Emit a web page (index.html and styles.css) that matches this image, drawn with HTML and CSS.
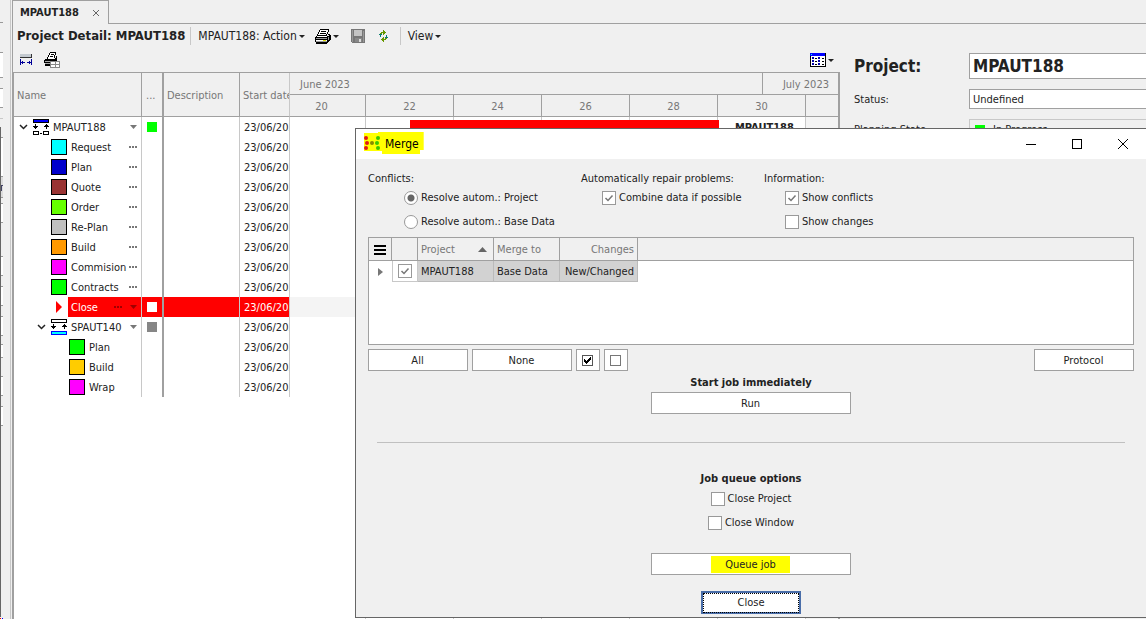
FILE: index.html
```html
<!DOCTYPE html>
<html lang="en">
<head>
  <meta charset="UTF-8" />
  <meta name="viewport" content="width=device-width, initial-scale=1.0" />
  <title>Project Detail: MPAUT188</title>
  <link rel="stylesheet" href="styles.css">
</head>
<body>
  <div class="app">
    <!-- edge of the docked panel on the left -->
    <aside class="dock">
      <svg width="3" height="619" shape-rendering="crispEdges">
        <path fill="#fff" d="M0 53h3v24H0zM0 89h3v18H0zM0 138h3v38H0zM0 204h3v18H0zM0 257h3v18H0zM0 287h3v18H0zM0 317h3v18H0zM0 345h3v12H0zM0 377h3v18H0zM0 407h3v18H0z" />
        <path fill="#ddd" d="M0 177h3v20H0z" />
        <path stroke="#999" d="M0 22.5h3M0 52.5h3M0 77.5h3M0 88.5h3M0 107.5h3M0 137.5h3M0 176.5h3M0 197.5h3M0 203.5h3M0 222.5h3M0 256.5h3M0 275.5h3M0 286.5h3M0 305.5h3M0 316.5h3M0 335.5h3M0 344.5h3M0 357.5h3M0 376.5h3M0 395.5h3M0 406.5h3M0 425.5h3" />
        <path stroke="#c8c8c8" d="M0 118.5h3" />
        <path fill="#666" d="M0 127h1v490H0z" />
        <path fill="#446" d="M1 185h2v1H1zM1 186h1v5H1z" />
        <path fill="#f00" d="M0 618h1v1H0z" />
        <path fill="#00f" d="M2 618h1v1H2z" />
      </svg>
    </aside>

    <main class="workspace">
      <div class="tabs">
        <div class="tab">MPAUT188 <button class="tab-close" aria-label="Close tab"><svg width="8" height="8" viewBox="0 0 8 8"><path d="M1 1l6 6M7 1L1 7" stroke="#666" /></svg></button></div>
      </div>

      <div class="toolbar">
        <h1>Project Detail: MPAUT188</h1>
        <button class="tool action">MPAUT188: Action <i class="caret"></i></button>
        <button class="tool print" aria-label="Print">
          <svg width="16" height="15" viewBox="0 0 16 15" shape-rendering="crispEdges">
            <path d="M5 1h9l-3 6H2z" fill="#fff" />
            <path d="M5 0h9v1H5zM4 1h1v2H4zM13 1h1v2h-1zM3 3h1v2H3zM12 3h1v2h-1zM2 5h1v2H2zM6 2h5v1H6zM5 4h6v1H5zM11 5h1v1h-1z" />
            <path d="M1 7h11v6H1z" fill="#fff" />
            <path d="M2 6h10v1H2zM1 7h1v1H1zM0 8h12v1H0zM0 8h1v5H0zM0 10h12v1H0zM1 13h11v2H1zM12 7h1v7h-1zM13 5h2v1h-2zM13 7h1v1h-1zM14 6h2v5h-2zM13 11h2v1h-2zM13 12h1v1h-1z" />
            <path d="M1 9h11v1H1zM1 12h11v1H1zM13 8h1v3h-1z" fill="#999" />
            <path d="M8 11h3v1H8z" fill="#dd0" />
          </svg>
          <i class="caret"></i>
        </button>
        <button class="tool save" aria-label="Save">
          <svg width="14" height="14" viewBox="0 0 14 14" shape-rendering="crispEdges">
            <path d="M0 0h14v14H1l-1-1z" fill="#777" />
            <path d="M1 1h1v12H1zM12 2h1v11h-1z" fill="#999" />
            <path d="M3 1h8v6H3z" fill="#c4c4c4" />
            <path d="M4 9h7v4H4z" fill="#888" />
            <path d="M8 10h2v3H8z" fill="#ddd" />
          </svg>
        </button>
        <button class="tool refresh" aria-label="Refresh">
          <svg width="9" height="12" viewBox="0 0 9 12" shape-rendering="crispEdges">
            <path d="M4 0h1v1h1v1h1v1H6v1H5v1H4V3H3v1H2v2H1V3h1V2h2z" fill="#690" />
            <path d="M5 12H4v-1H3v-1H2V9h1V8h1V7h1v2h1V8h1V6h1v3H7v1H5z" fill="#690" />
            <path d="M0 4h3v1H0zM1 5h1v2H1zM6 7h3v1H6zM7 5h1v2H7z" fill="#088070" />
          </svg>
        </button>
        <button class="tool view">View <i class="caret"></i></button>
      </div>

      <div class="content">
        <section class="plan">
          <div class="plan-tools">
            <button class="tool" aria-label="Fit columns">
              <svg width="13" height="12" viewBox="0 0 13 12" shape-rendering="crispEdges">
                <path d="M0 0h12v4H0z" fill="#c4cad0" />
                <path d="M11 0h1v4H0V3h11z" fill="#333" />
                <path d="M0 5h1v6H0zM11 5h1v6h-1zM1 8h4v1H1zM7 8h4v1H7zM2 7h1v3H2zM9 7h1v3H9z" fill="#009" />
              </svg>
            </button>
            <button class="tool" aria-label="Print preview">
              <svg width="17" height="17" viewBox="0 0 17 17" shape-rendering="crispEdges">
                <path d="M5 1h7l-2 6H3z" fill="#fff" />
                <path d="M6 0h6v1H6zM5 1h1v2H5zM4 3h1v2H4zM3 5h1v2H3zM11 1h1v2h-1zM10 3h1v3h-1zM7 2h3v1H7zM6 4h3v1H6zM1 7h11v1H1zM0 8h13v3H0zM1 12h6v2H1zM11 6h2v2h-2zM12 4h1v2h-1z" />
                <path d="M1 9h9v1H1zM1 11h6v1H1z" fill="#aaa" />
                <path d="M6 9h10v7H6z" fill="#fff" />
                <path d="M6 9h10v1H6zM6 15h10v1H6zM6 9h1v7H6zM15 9h1v7h-1zM7 12h8v1H7zM11 10h1v5h-1z" fill="#888" />
              </svg>
            </button>
            <button class="tool columns" aria-label="Table view">
              <svg width="16" height="14" viewBox="0 0 16 14" shape-rendering="crispEdges">
                <path d="M0 0h16v14H0z" />
                <path d="M0 3h15v10H1V3z" fill="#fff" />
                <path d="M0 0h15v3H0z" fill="#00f" />
                <path d="M1 1h1v1H1z" fill="#0ff" />
                <path d="M2 4h2v2H2zM2 7h2v2H2zM2 10h2v2H2zM8 4h2v2H8zM8 7h2v2H8zM8 10h2v2H8z" fill="#00a" />
                <path d="M5 5h2v1H5zM5 8h2v1H5zM5 11h2v1H5zM12 5h2v1h-2zM12 8h2v1h-2zM12 11h2v1h-2z" />
              </svg>
              <i class="caret"></i>
            </button>
          </div>

          <div class="gantt">
            <table class="tree">
              <colgroup><col class="col-name"><col class="col-state"><col class="col-desc"><col class="col-start"></colgroup>
              <thead>
                <tr><th>Name</th><th class="dots-head">...</th><th>Description</th><th>Start date</th></tr>
              </thead>
              <tbody id="tree-rows"></tbody>
            </table>

            <div class="timeline">
              <div class="months"><span class="june">June 2023</span><span class="july">July 2023</span></div>
              <div class="days"><span>20</span><span>22</span><span>24</span><span>26</span><span>28</span><span>30</span><span></span></div>
              <div class="chart">
                <div class="lane"><div class="bar"></div><b>MPAUT188</b></div>
                <div class="lane-selected"></div>
              </div>
            </div>
          </div>
        </section>

        <section class="detail">
          <label class="big" for="project">Project:</label>
          <input class="big" id="project" type="text" value="MPAUT188">
          <label for="status">Status:</label>
          <select id="status"><option>Undefined</option></select>
          <span>Planning State:</span>
          <div class="planning"><i class="led"></i>In Progress</div>
        </section>
      </div>
    </main>
  </div>

  <!-- Merge dialog -->
  <div class="dialog" role="dialog" aria-labelledby="dialog-title">
    <header class="titlebar">
      <div class="caption">
        <svg width="16" height="15" viewBox="0 0 16 15">
          <g fill="#e01818"><circle cx="2" cy="2" r="2" /><circle cx="3" cy="7" r="2" /><circle cx="2" cy="12" r="2" /></g>
          <circle cx="8" cy="7" r="2" fill="#8a8a00" />
          <g fill="#3cc800"><circle cx="14" cy="2" r="2" /><circle cx="13" cy="7" r="2" /><circle cx="14" cy="12" r="2" /></g>
        </svg>
        <span id="dialog-title">Merge</span>
      </div>
      <div class="window-buttons">
        <button aria-label="Minimize"><svg width="10" height="10" shape-rendering="crispEdges"><path d="M0 5.5h10" stroke="#000" /></svg></button>
        <button aria-label="Maximize"><svg width="10" height="10" shape-rendering="crispEdges"><path d="M.5.5h9v9h-9z" fill="none" stroke="#000" /></svg></button>
        <button aria-label="Close"><svg width="10" height="10"><path d="M0 0l10 10M10 0L0 10" stroke="#000" /></svg></button>
      </div>
    </header>

    <div class="dialog-body">
      <div class="options">
        <div class="group conflicts">
          <p>Conflicts:</p>
          <label><input type="radio" name="conflicts" checked>Resolve autom.: Project</label>
          <label><input type="radio" name="conflicts">Resolve autom.: Base Data</label>
        </div>
        <div class="group">
          <p>Automatically repair problems:</p>
          <label><input type="checkbox" checked>Combine data if possible</label>
        </div>
        <div class="group">
          <p>Information:</p>
          <label><input type="checkbox" checked>Show conflicts</label>
          <label><input type="checkbox">Show changes</label>
        </div>
      </div>

      <div class="list">
        <table class="merge">
          <colgroup><col class="col-handle"><col class="col-check"><col class="col-project"><col class="col-merge"><col class="col-changes"><col></colgroup>
          <thead>
            <tr>
              <th><svg class="menu" width="12" height="10" shape-rendering="crispEdges"><path d="M0 0h12v2H0zM0 4h12v2H0zM0 8h12v2H0z" /></svg></th>
              <th></th>
              <th><span class="sorted">Project <svg width="9" height="5"><path d="M0 5l4.500-5L9 5z" fill="#666" /></svg></span></th>
              <th>Merge to</th>
              <th class="right">Changes</th>
              <th></th>
            </tr>
          </thead>
          <tbody>
            <tr>
              <td><svg class="menu" width="5" height="8"><path d="M0 0l5 4-5 4z" fill="#777" /></svg></td>
              <td class="check"><input type="checkbox" aria-label="Merge MPAUT188" checked></td>
              <td class="cell">MPAUT188</td>
              <td class="cell">Base Data</td>
              <td class="cell right">New/Changed</td>
              <td></td>
            </tr>
          </tbody>
        </table>
      </div>

      <div class="list-buttons">
        <button class="btn">All</button>
        <button class="btn">None</button>
        <button class="btn small" aria-label="Check all"><svg width="11" height="11" shape-rendering="crispEdges"><path d="M.5.5h10v10H.5z" fill="#fff" stroke="#555" /><path d="M2 4h1v1h1v1h1V5h1V4h1V3h1V2h1v3H8v1H7v1H6v1H5v1H4V8H3V7H2z" /></svg></button>
        <button class="btn small" aria-label="Uncheck all"><svg width="11" height="11" shape-rendering="crispEdges"><path d="M.5.5h10v10H.5z" fill="#fff" stroke="#777" /></svg></button>
        <button class="btn protocol">Protocol</button>
      </div>

      <div class="jobs">
        <h2>Start job immediately</h2>
        <button class="btn wide">Run</button>
        <hr>
        <h2>Job queue options</h2>
        <label><input type="checkbox">Close Project</label>
        <label><input type="checkbox">Close Window</label>
        <button class="btn wide queue"><mark>Queue job</mark></button>
        <button class="btn default"><span>Close</span></button>
      </div>
    </div>
  </div>

  <script>
    const icons = {
      project: `<svg width="16" height="16" shape-rendering="crispEdges">
        <path d="M0 0h16v4H0z" /><path d="M1 1h14v2H1z" fill="#00f" />
        <path d="M2 5h1v5H2zM0 7h5v1H0zM1 8h3v1H1zM13 5h1v5h-1zM12 6h3v1h-3zM11 7h5v1h-5zM7 14h2v1H7z" />
        <path d="M.5 12.500h5v3h-5zM10.500 12.500h5v3h-5z" fill="#fff" stroke="#000" /></svg>`,
      sub: `<svg width="16" height="16" shape-rendering="crispEdges">
        <path d="M.5.5h15v3H.5z" fill="#fff" stroke="#000" />
        <path d="M2 5h1v5H2zM0 7h5v1H0zM1 8h3v1H1zM13 5h1v5h-1zM12 6h3v1h-3zM11 7h5v1h-5z" />
        <path d="M.5 12.500h15v3H.5z" fill="#0ff" stroke="#00f" /></svg>`,
      current: `<svg width="16" height="16"><path d="M5 2l6 6-6 6z" fill="#f00" /></svg>`,
      chevron: `<svg width="9" height="6"><path d="M1 1l3.500 3.500L8 1" fill="none" stroke="#222" stroke-width="1.500" /></svg>`,
      dots: `<svg width="8" height="2" shape-rendering="crispEdges"><path d="M0 0h2v2H0zM3 0h2v2H3zM6 0h2v2H6z" fill="currentColor" /></svg>`,
      arrow: `<svg width="7" height="4"><path d="M0 0h7L3.500 4z" fill="currentColor" /></svg>`
    };

    const rows = [
      { name: "MPAUT188", level: 0, icon: "project", state: "#00ff00", menu: ["arrow"] },
      { name: "Request", level: 1, color: "#00ffff", menu: ["dots"] },
      { name: "Plan", level: 1, color: "#0000cc", menu: ["dots"] },
      { name: "Quote", level: 1, color: "#993333", menu: ["dots"] },
      { name: "Order", level: 1, color: "#66ff00", menu: ["dots"] },
      { name: "Re-Plan", level: 1, color: "#c0c0c0", menu: ["dots"] },
      { name: "Build", level: 1, color: "#ff9900", menu: ["dots"] },
      { name: "Commision", level: 1, color: "#ff00ff", menu: ["dots"] },
      { name: "Contracts", level: 1, color: "#00ff00", menu: ["dots"] },
      { name: "Close", level: 1, icon: "current", state: "#ffffff", menu: ["dots", "arrow"], selected: true },
      { name: "SPAUT140", level: 1, icon: "sub", state: "#868686", menu: ["arrow"] },
      { name: "Plan", level: 2, color: "#00ff00", menu: [] },
      { name: "Build", level: 2, color: "#ffcc00", menu: [] },
      { name: "Wrap", level: 2, color: "#ff00ff", menu: [] }
    ];

    document.getElementById("tree-rows").innerHTML = rows.map(row => {
      const open = row.icon === "project" || row.icon === "sub";
      const icon = row.icon ? icons[row.icon] : `<i class="swatch" style="background: ${row.color}"></i>`;
      const state = row.state ? `<i class="state" style="background: ${row.state}"></i>` : "";
      return `
        <tr class="${row.selected ? "selected" : ""}">
          <td><div class="node level-${row.level}">
            <span class="toggle">${open ? icons.chevron : ""}</span>${icon}
            <span class="name"><span class="label">${row.name}</span><span class="menu-icons">${row.menu.map(m => icons[m]).join("")}</span></span>
          </div></td>
          <td>${state}</td>
          <td></td>
          <td>23/06/2023</td>
        </tr>`;
    }).join("");
  </script>
</body>
</html>
```
FILE: styles.css
```css
* {
  box-sizing: border-box;
}
body {
  margin: 0;
  height: 100vh;
  overflow: hidden;
  background: #f0f0f0;
  color: #222;
  font-family: "DejaVu Sans Condensed", "DejaVu Sans", sans-serif;
  font-size: 11px;
  line-height: 18px;
}
button, input, select {
  font: inherit;
  color: inherit;
  margin: 0;
}
h1, h2, p {
  margin: 0;
}
svg {
  display: block;
  flex: none;
}

/* Main window */
.app {
  display: flex;
  height: 100vh;
}
.dock {
  flex: none;
  width: 12px;
  overflow: hidden;
  background: linear-gradient(90deg, transparent 10px, #c8c8c8 10px, #c8c8c8 11px, transparent 11px);
}
.workspace {
  flex: 1;
  min-width: 0;
  display: flex;
  flex-direction: column;
}
.tabs {
  display: flex;
  height: 24px;
}
.tabs::after {
  content: "";
  flex: 1;
  border-bottom: 1px solid #a0a0a0;
}
.tab {
  display: flex;
  align-items: center;
  gap: 13px;
  padding: 0 8px 0 7px;
  border: 1px solid #a0a0a0;
  border-bottom: none;
  font-weight: bold;
}
.tab-close {
  display: flex;
  padding: 0;
  border: none;
  background: none;
}
.toolbar {
  display: flex;
  align-items: center;
  height: 24px;
  padding-left: 4px;
  border-left: 1px solid #a0a0a0;
}
.toolbar h1 {
  font-size: 13px;
  padding-right: 5px;
  border-right: 1px solid #c8c8c8;
}
.tool {
  display: flex;
  align-items: center;
  gap: 2px;
  padding: 0;
  border: none;
  background: none;
  font-size: 12px;
}
.action {
  margin-left: 7px;
}
.print {
  margin-left: 10px;
}
.save {
  margin-left: 12px;
}
.refresh {
  margin-left: 14px;
}
.view {
  margin-left: 12px;
  padding-left: 7px;
  border-left: 1px solid #c8c8c8;
}
.caret {
  border: 3px solid transparent;
  border-top-color: #222;
  border-bottom: none;
}
.content {
  flex: 1;
  min-height: 0;
  display: flex;
}
.plan {
  flex: 1;
  min-width: 0;
  display: flex;
  flex-direction: column;
}
.plan-tools {
  display: flex;
  align-items: center;
  gap: 11px;
  height: 24px;
  padding: 0 6px 0 7px;
  border-left: 1px solid #a0a0a0;
}
.columns {
  margin-left: auto;
}

/* Tree and time line */
.gantt {
  flex: 1;
  display: flex;
  background: #fff;
  border: 2px solid #a0a0a0;
  border-top-width: 1px;
  border-bottom: none;
}
table {
  border-collapse: separate;
  border-spacing: 0;
  table-layout: fixed;
}
th, td {
  padding: 0;
  font-weight: normal;
  text-align: left;
  white-space: nowrap;
  overflow: hidden;
}
th {
  background: #f0f0f0;
  color: #777;
  border-right: 1px solid #a0a0a0;
  border-bottom: 1px solid #a0a0a0;
}
.tree {
  flex: none;
  align-self: flex-start;
  width: 276px;
}
.col-name {
  width: 128px;
}
.col-state {
  width: 22px;
}
.col-desc {
  width: 76px;
}
.col-start {
  width: 50px;
}
.tree th {
  height: 44px;
  padding: 2px 0 0 3px;
}
.tree .dots-head {
  padding-left: 4px;
}
.tree td {
  height: 20px;
  border-right: 1px solid #c8c8c8;
}
.tree th:nth-child(2), .tree td:nth-child(2) {
  border-right: 2px solid #a0a0a0;
}
.tree th:nth-child(4) {
  border-right-color: #c8c8c8;
}
.tree td:nth-child(4) {
  padding: 2px 0 0 4px;
}
.node {
  display: flex;
  align-items: center;
  height: 20px;
}
.level-1 {
  padding-left: 18px;
}
.level-2 {
  padding-left: 36px;
}
.toggle {
  flex: none;
  width: 19px;
  padding-left: 5px;
}
.swatch {
  flex: none;
  width: 16px;
  height: 16px;
  border: 1px solid #000;
}
.name {
  flex: 1;
  display: flex;
  align-items: center;
  justify-content: space-between;
  height: 20px;
  margin-left: 1px;
  padding: 0 4px 0 3px;
}
.label {
  padding-top: 2px;
}
.menu-icons {
  display: flex;
  align-items: center;
  gap: 8px;
  color: #777;
}
.state {
  display: block;
  width: 10px;
  height: 10px;
  margin-left: 5px;
}
.selected .name, .selected td:not(:first-child) {
  background: #f00;
  color: #fff;
}
.selected .menu-icons {
  color: #a00000;
}
.timeline {
  flex: 1;
  min-width: 0;
  display: flex;
  flex-direction: column;
}
.months, .days {
  display: flex;
  height: 22px;
  line-height: 23px;
  background: #f0f0f0;
  border-bottom: 1px solid #a0a0a0;
  color: #777;
}
.june {
  flex: 1;
  padding-left: 10px;
}
.july {
  width: 76px;
  padding-right: 9px;
  border-left: 1px solid #a0a0a0;
  text-align: right;
}
.days span {
  width: 88px;
  border-right: 1px solid #a0a0a0;
  text-align: center;
}
.days span:first-child {
  width: 76px;
  padding-right: 12px;
}
.days span:last-child {
  flex: 1;
  border: none;
}
.chart {
  flex: 1;
  background: linear-gradient(90deg, transparent 516px, #f4f4f4 516px), repeating-linear-gradient(90deg, transparent 0, transparent 75px, #c8c8c8 75px, #c8c8c8 76px, transparent 76px, transparent 88px);
}
.lane {
  display: flex;
  height: 180px;
  padding: 3px 0 0 120px;
}
.bar {
  width: 309px;
  height: 14px;
  background: #f00;
}
.lane b {
  padding: 0 8px 0 16px;
  height: 14px;
  line-height: 15px;
}
.lane-selected {
  height: 20px;
  background: #f4f4f4;
}

/* Project fields */
.detail {
  flex: none;
  width: 306px;
  display: grid;
  grid-template-columns: 115px 1fr;
  grid-template-rows: 26px 20px 20px;
  row-gap: 10px;
  align-items: center;
  padding: 5px 0 0 14px;
}
.detail > label:not(.big), .detail > span {
  padding-top: 2px;
}
.detail input, .detail select, .planning {
  width: 100%;
  height: 100%;
  padding: 0 3px;
  border: 1px solid #a0a0a0;
  border-right: none;
  border-radius: 0;
  background: #fff;
  appearance: none;
}
.detail select, .detail .planning {
  padding-top: 1px;
}
.detail .big {
  font-size: 17px;
  font-weight: bold;
}
.detail .planning {
  display: flex;
  align-items: center;
  gap: 8px;
  padding-left: 5px;
  border-color: #c8c8c8;
  background: #f0f0f0;
}
.led {
  width: 10px;
  height: 10px;
  background: #0f0;
}

/* Dialog */
.dialog {
  position: absolute;
  top: 128px;
  left: 355px;
  right: 0;
  border: 1px solid #666;
  border-right: none;
  background: #f0f0f0;
}
.titlebar {
  display: flex;
  justify-content: space-between;
  height: 30px;
  background: #fff;
}
.caption {
  align-self: flex-start;
  display: flex;
  align-items: center;
  gap: 5px;
  height: 22px;
  margin: 3px 0 0 8px;
  padding: 0 5px 0 0;
  background: #ff0;
  clip-path: polygon(0 1px, 14px 1px, 14px 0, 100% 0, 100% 18px, 56px 18px, 56px 100%, 18px 100%, 18px 19px, 0 19px);
  color: #000;
  font-size: 12px;
}
#dialog-title {
  padding-top: 2px;
}
.window-buttons {
  display: flex;
}
.window-buttons button {
  display: flex;
  align-items: center;
  justify-content: center;
  width: 46px;
  padding: 0;
  border: none;
  background: none;
}
.dialog-body {
  padding: 9px 12px 3px;
}
.options {
  display: grid;
  grid-template-columns: 213px 183px 1fr;
}
.group p {
  padding-top: 3px;
  line-height: 15px;
}
.group label {
  display: flex;
  align-items: center;
  gap: 3px;
  height: 24px;
  padding-left: 21px;
}
.conflicts label {
  padding-left: 36px;
}
input[type="checkbox"], input[type="radio"] {
  appearance: none;
  flex: none;
  width: 14px;
  height: 14px;
  border: 1px solid #999;
  background: #fff;
}
input[type="radio"] {
  border-radius: 50%;
}
input[type="radio"]:checked {
  background: radial-gradient(circle, #666 3px, #fff 4px);
}
input[type="checkbox"]:checked {
  background: #fff url("data:image/svg+xml,%3Csvg xmlns='http://www.w3.org/2000/svg' width='12' height='12'%3E%3Cpath d='M2.500 6l2.500 2.500L9.500 3.500' fill='none' stroke='%23777' stroke-width='1.500'/%3E%3C/svg%3E") center no-repeat;
}
.list {
  height: 108px;
  margin-top: 3px;
  border: 1px solid #a0a0a0;
  background: #fff;
}
.merge {
  width: 100%;
}
.col-handle {
  width: 23px;
}
.col-check {
  width: 26px;
}
.col-project {
  width: 76px;
}
.col-merge {
  width: 66px;
}
.col-changes {
  width: 78px;
}
.merge th {
  height: 23px;
  padding: 1px 3px 0;
}
.merge th:last-child {
  border-right: none;
}
.merge td {
  height: 21px;
}
.sorted {
  display: flex;
  align-items: center;
  justify-content: space-between;
  padding-right: 3px;
}
.menu {
  margin: 0 auto;
}
.merge .check {
  border: 1px solid #c8c8c8;
  border-top: none;
  text-align: center;
}
.check input {
  display: block;
  margin: 0 auto;
}
.merge .cell {
  padding: 2px 3px 0;
  background: #d2d2d2;
  border-right: 1px solid #bbb;
  border-bottom: 1px solid #bbb;
}
.merge .right {
  text-align: right;
}
.list-buttons {
  display: flex;
  gap: 4px;
  margin-top: 4px;
}
.btn {
  display: flex;
  align-items: center;
  justify-content: center;
  width: 100px;
  height: 22px;
  padding: 1px 1px 0 0;
  border: 1px solid #a0a0a0;
  border-radius: 0;
  background: #fff;
}
.small {
  width: 24px;
}
.protocol {
  margin-left: auto;
}
.jobs {
  display: flex;
  flex-direction: column;
  align-items: center;
  margin-top: 3px;
}
.jobs h2 {
  font-size: 11px;
}
.jobs .wide {
  width: 200px;
}
.jobs hr {
  align-self: stretch;
  margin: 28px 9px 27px;
  border: none;
  border-top: 1px solid #c0c0c0;
}
.jobs label {
  display: flex;
  align-items: center;
  gap: 3px;
  height: 24px;
}
.jobs label:first-of-type {
  margin-top: -1px;
}
.jobs .queue {
  margin: 18px 0 16px;
  padding-top: 0;
}
mark {
  padding: 0 14px;
  line-height: 17px;
  background: #ff0;
  color: #222;
}
.jobs .default {
  height: 23px;
  padding: 0;
  border: 2px solid #4a6ea9;
}
.default span {
  flex: 1;
  border: 1px dotted #000;
}
```
